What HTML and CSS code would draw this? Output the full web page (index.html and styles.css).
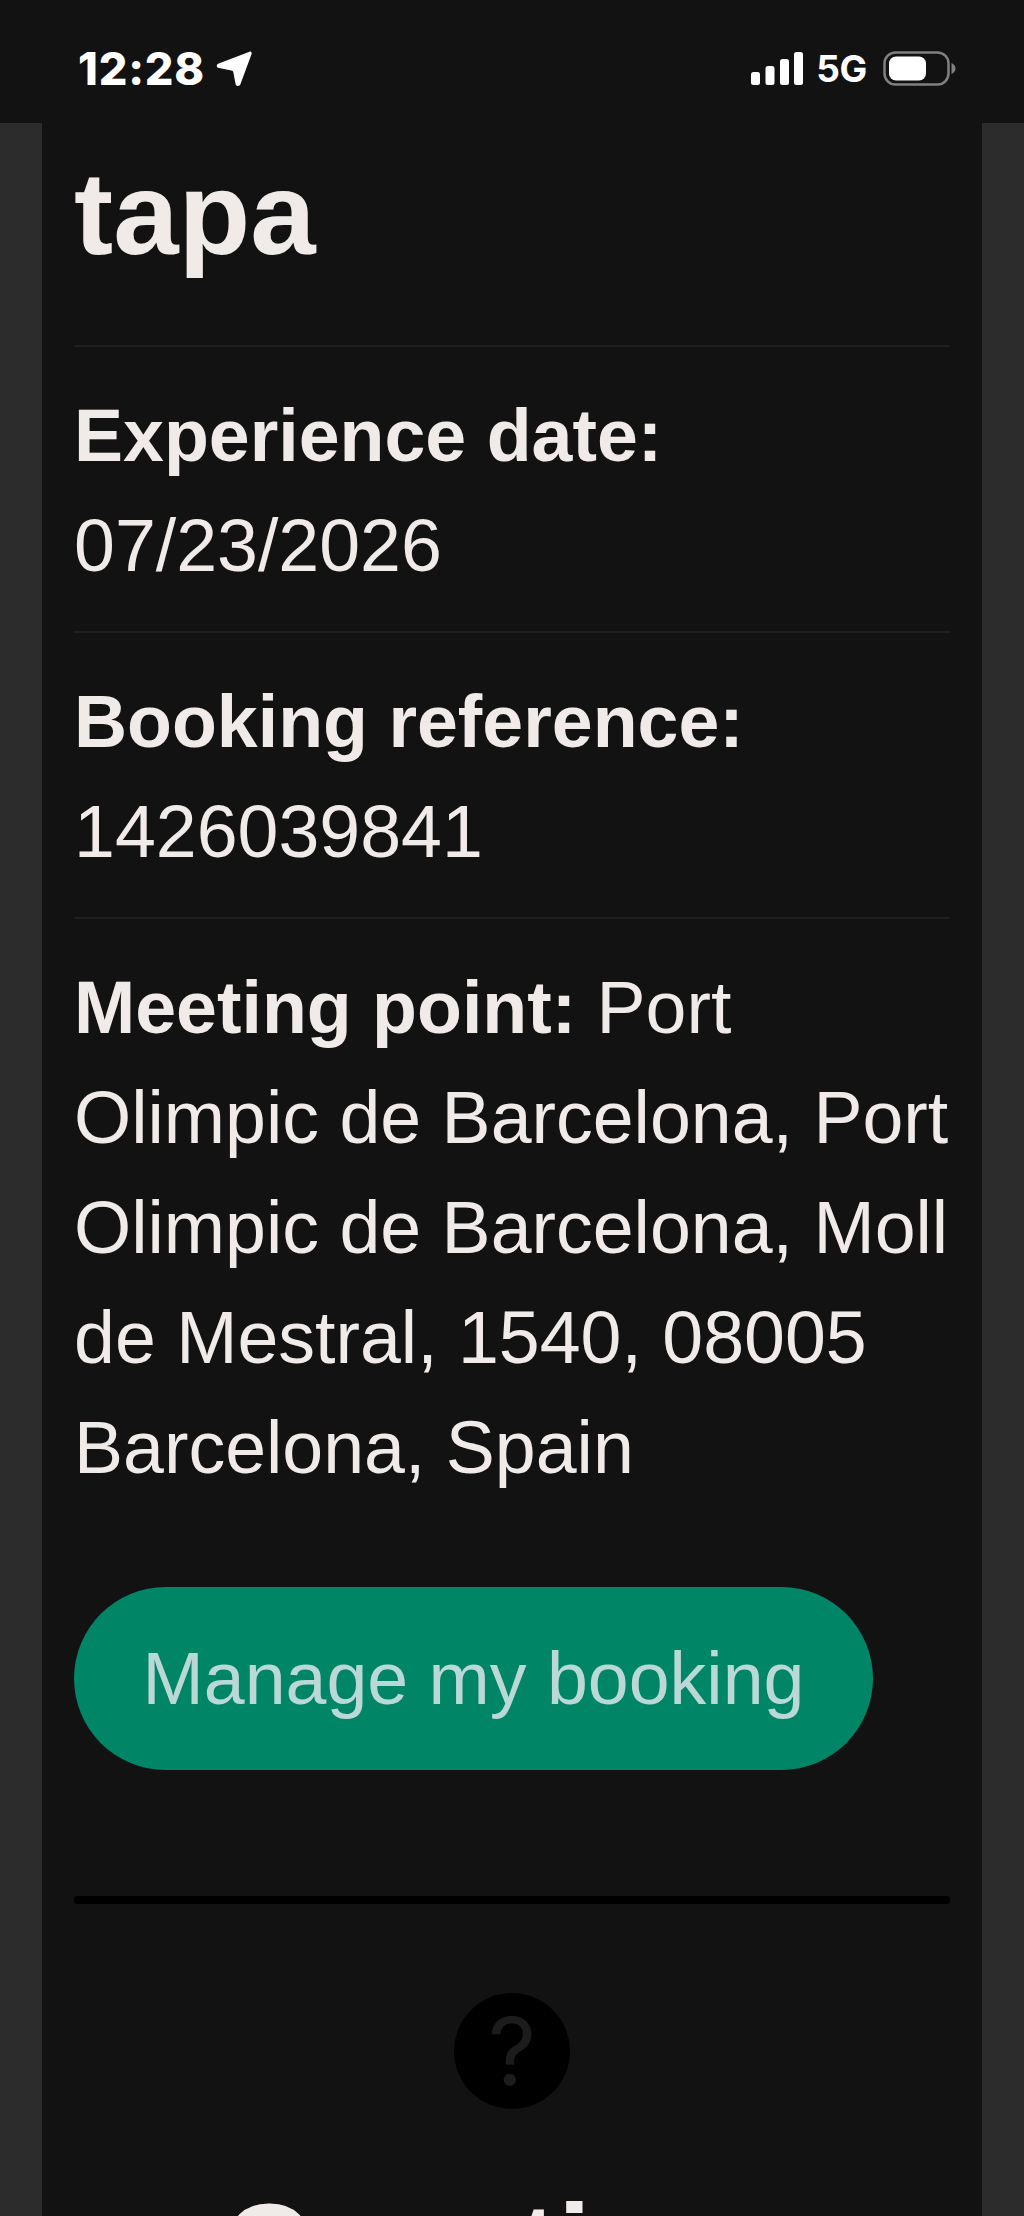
FILE: index.html
```html
<!DOCTYPE html>
<html lang="en">
<head>
<meta charset="utf-8">
<title>Booking</title>
<link rel="stylesheet" href="styles.css">
</head>
<body>
<header class="status">
  <div class="status-left">
    <span class="time">12:28</span>
    <svg class="loc" width="36" height="37" viewBox="0 0 36 36"><path d="M33.5 1.2 C35 .8 36 1.9 35.6 3.4 L24.5 33.6 C23.4 36.4 20.1 36.2 19.5 33.3 L17.3 21.6 C17.1 20.6 16.5 20.1 15.5 20 L3 17.6 C.1 17 -.1 14 2.7 12.9 Z" fill="#fff"/></svg>
  </div>
  <div class="status-right">
    <svg class="signal" width="52" height="33" viewBox="0 0 52 33"><rect x="0" y="20" width="9" height="13" rx="2.5" fill="#fff"/><rect x="14.5" y="14" width="9" height="19" rx="2.5" fill="#fff"/><rect x="29" y="7" width="9" height="26" rx="2.5" fill="#fff"/><rect x="43" y="0" width="9" height="33" rx="2.5" fill="#fff"/></svg>
    <span class="net">5G</span>
    <svg class="batt" width="73" height="35" viewBox="0 0 73 35"><rect x="1.5" y="1.5" width="64" height="32" rx="11" fill="none" stroke="#808080" stroke-width="2.5"/><rect x="6" y="5.5" width="37" height="24" rx="7" fill="#fff"/><path d="M68.5 12 C71 13 72.5 15 72.5 17.5 C72.5 20 71 22 68.5 23 Z" fill="#808080"/></svg>
  </div>
</header>
<main class="panel">
  <h1 class="title">tapa</h1>
  <section class="item"><p><strong>Experience date:</strong><br>07/23/2026</p></section>
  <section class="item"><p><strong>Booking reference:</strong><br>1426039841</p></section>
  <section class="item"><p><strong>Meeting point:</strong> Port Olimpic de Barcelona, Port Olimpic de Barcelona, Moll de Mestral, 1540, 08005 Barcelona, Spain</p></section>
  <a class="btn" href="#">Manage my booking</a>
  <hr class="rule">
  <section class="help">
    <div class="help-icon">?</div>
    <h2 class="help-title">Questions</h2>
  </section>
</main>
</body>
</html>
```
FILE: styles.css
```css
* { box-sizing: border-box; }
html, body { margin: 0; height: 2216px; overflow: hidden; }
body {
  background: #2c2c2c;
  font-family: "Liberation Sans", Arial, sans-serif;
  color: #f0ebe8;
}
.status {
  height: 123px;
  background: #121212;
  display: flex;
  justify-content: space-between;
  align-items: flex-start;
  padding: 50px 68px 0 78px;
}
.status-left { display: flex; align-items: center; gap: 11px; }
.time {
  font-family: Inter, "Liberation Sans", sans-serif;
  font-weight: 800;
  font-size: 45px;
  line-height: 36px;
  letter-spacing: 0.8px;
  color: #fff;
}
.status-right { display: flex; align-items: center; gap: 16px; padding-top: 1px; }
.signal { margin-right: -3px; }
.net {
  font-family: Inter, "Liberation Sans", sans-serif;
  font-weight: 700;
  font-size: 37px;
  line-height: 33px;
  color: #fff;
  letter-spacing: -0.3px;
}
.panel {
  margin: 0 42px;
  padding: 0 32px;
  background: #121212;
  height: 2093px;
  overflow: hidden;
}
.title {
  margin: 0;
  font-size: 117.5px;
  line-height: 130px;
  padding: 26px 0 66px;
  font-weight: 700;
}
.item { border-top: 2px solid #1c1e20; padding: 34px 0 30px; }
.item p { margin: 0; font-size: 73.5px; line-height: 110px; }
.item strong { font-weight: 700; }
.btn {
  display: inline-block;
  margin-top: 54px;
  height: 183px;
  width: 799px;
  border-radius: 92px;
  background: #008567;
  color: #b9d8d6;
  text-decoration: none;
  font-size: 73.5px;
  line-height: 183px;
  text-align: center;
}
.rule {
  margin: 126px 0 0;
  height: 8px;
  background: #000;
  border: 0;
  border-radius: 3px;
}
.help { display: flex; flex-direction: column; align-items: center; padding-top: 89px; }
.help-icon {
  width: 116px;
  height: 116px;
  border-radius: 50%;
  background: #000;
  color: #1c1c1c;
  font-family: Inter, "Liberation Sans", sans-serif;
  font-size: 94px;
  line-height: 116px;
  text-align: center;
  font-weight: 400;
}
.help-title { margin: 72px 0 0; font-size: 118px; line-height: 130px; font-weight: 700; text-align: center; }
```
